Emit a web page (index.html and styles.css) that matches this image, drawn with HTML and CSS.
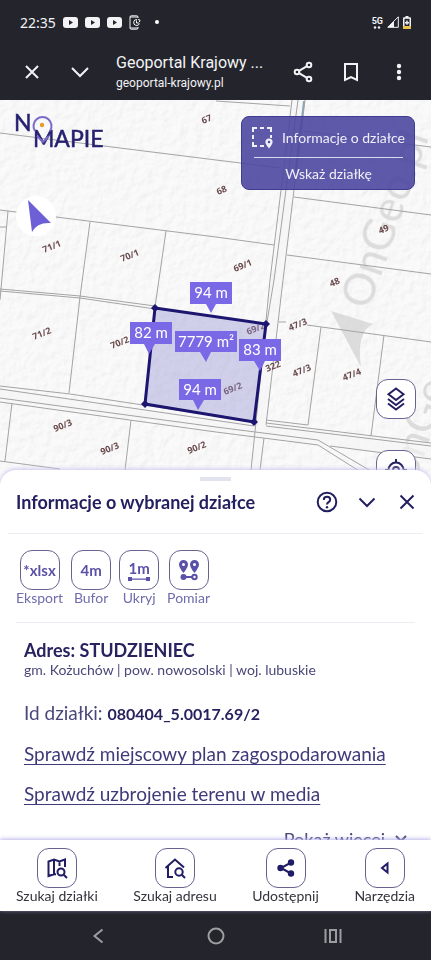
FILE: index.html
```
<!DOCTYPE html>
<html lang="pl">
<head>
<meta charset="utf-8">
<meta name="viewport" content="width=device-width, initial-scale=1">
<title>Geoportal Krajowy</title>
<link rel="stylesheet" href="styles.css">
</head>
<body>
<div class="screen">
  <header class="system">
    <div class="status">
      <div class="status-side">
        <span class="clock">22:35</span>
        <svg class="yt" viewBox="0 0 15 11"><rect width="15" height="11" rx="3"/><path class="ink" d="M6 3l4 2.500-4 2.500z"/></svg>
        <svg class="yt" viewBox="0 0 15 11"><rect width="15" height="11" rx="3"/><path class="ink" d="M6 3l4 2.500-4 2.500z"/></svg>
        <svg class="yt" viewBox="0 0 15 11"><rect width="15" height="11" rx="3"/><path class="ink" d="M6 3l4 2.500-4 2.500z"/></svg>
        <svg class="device" viewBox="0 0 12 15"><path class="line" d="M9 3V2a1.200 1.200 0 0 0-1.200-1.200H2.200A1.200 1.200 0 0 0 1 2v11a1.200 1.200 0 0 0 1.200 1.200h5.600A1.200 1.200 0 0 0 9 13v-1M1 2h8M1 13h8M8 4.500a3 3 0 1 0 2.500 4M7.500 5.500V8H10M9 4.500l2 .5-.5 2"/></svg>
        <span class="dot"></span>
      </div>
      <div class="status-side status-right">
        <span class="network">5G<svg viewBox="0 0 8 3"><circle cx="2" cy="1.500" r="1.200"/><circle cx="6" cy="1.500" r="1.200"/></svg></span>
        <svg class="signal" viewBox="0 0 12 12"><path class="line" d="M.8 11.300L11.300.8v10.500z"/><path d="M.8 11.300L7 5v6.300z"/></svg>
        <svg class="battery" viewBox="0 0 8 13"><path d="M2.500 0h3v1.300H7A1 1 0 0 1 8 2.300V12a1 1 0 0 1-1 1H1a1 1 0 0 1-1-1V2.300a1 1 0 0 1 1-1h1.500z"/><path class="ink" d="M1.500 2.800h5v7.200h-5z"/><path class="charge" d="M0 10h8v2a1 1 0 0 1-1 1H1a1 1 0 0 1-1-1z"/><path d="M3.300 4.500h1.400V6h1.300v1.400H4.700v1.400H3.300V7.400H2V6h1.300z"/></svg>
      </div>
    </div>
    <div class="toolbar">
      <button class="bare" aria-label="Zamknij kartę"><svg class="i24" viewBox="0 0 24 24"><path class="line" d="M6 6l12 12M18 6L6 18"/></svg></button>
      <button class="bare" aria-label="Zwiń kartę"><svg class="i24" viewBox="0 0 24 24"><path class="line" d="M4 8l8 8 8-8"/></svg></button>
      <div class="page-name"><span class="page-title">Geoportal Krajowy ...</span><span class="page-url">geoportal-krajowy.pl</span></div>
      <button class="bare" aria-label="Udostępnij stronę"><svg class="i24" viewBox="0 0 24 24"><g class="line"><circle cx="6" cy="12" r="2.300"/><circle cx="18" cy="5" r="2.300"/><circle cx="18" cy="19" r="2.300"/><path d="M8 10.900l8-4.700M8 13.100l8 4.700"/></g></svg></button>
      <button class="bare" aria-label="Dodaj zakładkę"><svg class="i24" viewBox="0 0 24 24"><path class="line" d="M6 4h12v16l-6-3-6 3z"/></svg></button>
      <button class="bare" aria-label="Menu"><svg class="i24" viewBox="0 0 24 24"><circle cx="12" cy="6" r="2.200"/><circle cx="12" cy="12" r="2.200"/><circle cx="12" cy="18" r="2.200"/></svg></button>
    </div>
  </header>

  <main class="content">
    <section class="map" aria-label="Mapa działek">
      <svg class="canvas" viewBox="0 100 431 386" preserveAspectRatio="xMidYMin slice">
        <defs>
          <filter id="paper" x="0" y="0" width="100%" height="100%">
            <feTurbulence type="fractalNoise" baseFrequency="0.12" numOctaves="3" seed="4" result="n"/>
            <feDiffuseLighting in="n" surfaceScale="0.9" diffuseConstant="1.130" lighting-color="#fbfbfb"><feDistantLight azimuth="225" elevation="60"/></feDiffuseLighting>
          </filter>
        </defs>
        <rect x="0" y="100" width="431" height="391" fill="#f8f8f8"/>
        <rect x="0" y="100" width="431" height="391" filter="url(#paper)" opacity=".4"/>
        <g class="watermark">
          <text transform="translate(369 311) rotate(-71)">OnGeo.pl</text>
          <text transform="translate(415 483) rotate(-71)">onGeo.pl</text>
          <path d="M331 311l42 13q-17 8-12 43z"/>
        </g>
        <g class="roadfill"><path d="M292 101h12l-39 321-5 48h-8l5-48z"/><path d="M0 389l216 31 215 24v15l-113-14-102-15L0 400z"/></g>
        <g class="borders">
          <path d="M0 133L216 160L281 168M0 210L216 237L274 245M8 211L0 300M90 222L80 297L69 393M166 231L155 307M0 227h6M216 101L290 106"/>
          <path d="M292 100L270 280L256 422L251 470M298 100L274 280L267 322M305 100L283 280L266 425M264 438L260 470M294 197L431 215M287 255L431 274M303 131L431 147"/>
          <path d="M0 289L80 296L155 306M0 291L80 298L155 309M0 386L70 394L216 416L254 422M0 389L145 410L254 426M0 398L216 427L318 440L376 474M0 402L216 432L318 445L364 474M12 403L5 461M131 420L125 470M0 461L60 469"/>
          <path d="M279 322h7M307 325L431 342M321 327L308 425L266 420M384 335L371 436M266 423L431 443M266 426L431 446M330 446L431 459"/>
        </g>
        <path class="water" d="M304 101L296 170"/>
        <g class="numbers">
          <text transform="translate(203 124) rotate(-22)">67</text><text transform="translate(218 195) rotate(-22)">68</text>
          <text transform="translate(44 253) rotate(-22)">71/1</text><text transform="translate(122 262) rotate(-22)">70/1</text>
          <text transform="translate(235 272) rotate(-22)">69/1</text><text transform="translate(380 234) rotate(-22)">49</text>
          <text transform="translate(331 287) rotate(-22)">48</text><text transform="translate(34 340) rotate(-22)">71/2</text>
          <text transform="translate(112 349) rotate(-22)">70/2</text><text transform="translate(290 331) rotate(-22)">47/3</text>
          <text transform="translate(294 377) rotate(-22)">47/3</text><text transform="translate(344 381) rotate(-22)">47/4</text>
          <text transform="translate(267 372) rotate(-22)">322</text><text transform="translate(55 432) rotate(-22)">90/3</text>
          <text transform="translate(102 455) rotate(-22)">90/3</text><text transform="translate(189 454) rotate(-22)">90/2</text>
          <text transform="translate(248 335) rotate(-22)">69/2</text><text transform="translate(225 395) rotate(-22)">69/2</text>
        </g>
        <path class="parcel" d="M155 308L266 324L254 422L145 404z"/>
        <g class="nodes"><path d="M155 304l4 4-4 4-4-4zM266 320l4 4-4 4-4-4zM254 418l4 4-4 4-4-4zM145 400l4 4-4 4-4-4z"/></g>
        <g class="tags">
          <path d="M190 282h42v22h-16l-5 9-5-9h-16zM130 322h42v22h-17l-6 10-5-10h-14zM175 331h62v21h-26l-5 10-6-10h-25zM239 339h42v22h-16l-5 10-6-10h-15zM179 379h42v21h-17l-6 10-5-10h-14z"/>
          <text x="211" y="298">94 m</text><text x="151" y="338">82 m</text><text x="206" y="347">7779 m²</text><text x="260" y="355">83 m</text><text x="200" y="395">94 m</text>
        </g>
        <g class="compass"><circle cx="36" cy="216" r="20"/><path d="M28 200l23 23q-14-1-19 9z"/></g>
        <g class="logo">
          <text x="14" y="131">N</text><text x="33" y="147">MAPIE</text>
          <path class="pin" d="M35 131a9 9 0 1 1 15 0M37 136l6 6 6-6"/><circle cx="42" cy="125" r="2.200"/>
        </g>
      </svg>

      <div class="hint">
        <button class="hint-main">
          <svg class="select-area" viewBox="0 0 24 24"><path class="line" d="M3 7V3h4M10 3h4M17 3h4v4M21 10v3M3 10v4M3 17v4h4M10 21h4"/><path d="M19 13.500a3.600 3.600 0 0 0-3.600 3.600c0 2.500 3.600 6.400 3.600 6.400s3.600-3.900 3.600-6.400a3.600 3.600 0 0 0-3.600-3.600z"/><circle class="hole" cx="19" cy="17" r="1.200"/></svg>
          Informacje o działce
        </button>
        <button class="hint-sub">Wskaż działkę</button>
      </div>

      <div class="map-actions">
        <button class="tile" aria-label="Warstwy"><svg class="i24" viewBox="0 0 24 24"><g class="line"><path d="M12 1.500l7.500 5.800-7.500 5.800-7.500-5.800z"/><path d="M4 12l8 6 8-6M4 16.500l8 6 8-6"/></g></svg></button>
        <button class="tile" aria-label="Moja lokalizacja"><svg class="i24" viewBox="0 0 24 24"><circle class="line" cx="12" cy="12" r="7.500"/><circle class="line" cx="12" cy="12" r="3"/><path class="line" d="M12 1v4M12 19v4M1 12h4M19 12h4"/></svg></button>
      </div>
    </section>

    <section class="sheet">
      <div class="grip"></div>
      <header class="sheet-head">
        <h1>Informacje o wybranej działce</h1>
        <button class="bare" aria-label="Pomoc"><svg class="i24" viewBox="0 0 24 24"><circle class="line" cx="12" cy="12" r="9.300"/><path class="line" d="M8.800 10c0-1.900 1.300-3.200 3.200-3.200s3.200 1.200 3.200 2.900c0 2.400-3.200 2.500-3.200 4.800"/><circle cx="12" cy="17.200" r="1.200"/></svg></button>
        <button class="bare" aria-label="Zwiń"><svg class="i24" viewBox="0 0 24 24"><path class="line" d="M4.500 8.500l7.500 7.500 7.500-7.500"/></svg></button>
        <button class="bare" aria-label="Zamknij"><svg class="i24" viewBox="0 0 24 24"><path class="line" d="M5.500 5.500l13 13M18.500 5.500l-13 13"/></svg></button>
      </header>
      <div class="tools">
        <button class="tool"><span class="tile">*xlsx</span>Eksport</button>
        <button class="tool"><span class="tile">4m</span>Bufor</button>
        <button class="tool"><span class="tile measure">1m<svg viewBox="0 0 22 4"><path d="M0 0h4v4H0zM18 0h4v4h-4zM4 1.500h14v1.200H4z"/></svg></span>Ukryj</button>
        <button class="tool"><span class="tile"><svg class="i24" viewBox="0 0 24 24"><path fill-rule="evenodd" d="M6.500 2A4.500 4.500 0 0 0 2 6.500C2 9.700 6.500 15 6.500 15S11 9.700 11 6.500A4.500 4.500 0 0 0 6.500 2zm0 3a1.500 1.500 0 1 1 0 3 1.500 1.500 0 0 1 0-3zM17.500 2A4.500 4.500 0 0 0 13 6.500c0 3.200 4.500 8.500 4.500 8.500S22 9.700 22 6.500A4.500 4.500 0 0 0 17.500 2zm0 3a1.500 1.500 0 1 1 0 3 1.500 1.500 0 0 1 0-3z"/><circle cx="6.500" cy="19" r="3"/><path d="M8 18h8v2H8z"/><circle class="line" cx="17.500" cy="19" r="2.200"/></svg></span>Pomiar</button>
      </div>
      <div class="details">
        <h2>Adres: STUDZIENIEC</h2>
        <p class="region">gm. Kożuchów | pow. nowosolski | woj. lubuskie</p>
        <p class="row">Id działki: <strong>080404_5.0017.69/2</strong></p>
        <a class="row" href="#plan">Sprawdź miejscowy plan zagospodarowania</a>
        <a class="row" href="#media">Sprawdź uzbrojenie terenu w media</a>
        <button class="more">Pokaż więcej <svg viewBox="0 0 12 8"><path class="line" d="M1 1l5 5 5-5"/></svg></button>
      </div>
    </section>
  </main>

  <nav class="tabs">
    <button class="tab"><span class="tile"><svg class="i24" viewBox="0 0 24 24"><g class="line"><path d="M20 11V3.500l-5.500 2-5.500-2-5.500 2V20L9 18.200h2M9 3.500v14.500M14.500 5.500V10"/><circle cx="16" cy="16" r="3.500"/><path d="M18.700 18.700L22 22"/></g></svg></span>Szukaj działki</button>
    <button class="tab"><span class="tile"><svg class="i24" viewBox="0 0 24 24"><g class="line"><path d="M2.500 12L12 3.500l9 8M5 10v11h5"/><circle cx="16" cy="16" r="3.700"/><path d="M18.800 18.800L22 22"/></g></svg></span>Szukaj adresu</button>
    <button class="tab"><span class="tile"><svg class="i24" viewBox="0 0 24 24"><circle cx="6.500" cy="12" r="3.200"/><circle cx="17" cy="6.500" r="3.200"/><circle cx="17" cy="17.500" r="3.200"/><path class="line" d="M17 6.500L7 12l10 5.500"/></svg></span>Udostępnij</button>
    <button class="tab"><span class="tile"><svg class="i24" viewBox="0 0 24 24"><path class="line" d="M14.500 7.500v9L9 12z"/></svg></span>Narzędzia</button>
  </nav>

  <footer class="android">
    <button class="bare" aria-label="Wstecz"><svg class="i24" viewBox="0 0 24 24"><path class="line" d="M15.500 5.500L7.500 12l8 6.500"/></svg></button>
    <button class="bare" aria-label="Ekran główny"><svg class="i24" viewBox="0 0 24 24"><circle class="line" cx="12" cy="12" r="7.500"/></svg></button>
    <button class="bare" aria-label="Ostatnie"><svg class="i24" viewBox="0 0 24 24"><path class="line" d="M4.500 5v14M19.500 5v14M9 6h6v12H9z"/></svg></button>
  </footer>
</div>
</body>
</html>
```
FILE: styles.css
```
* { box-sizing: border-box; }
body { margin: 0; font-family: Lato, "Noto Sans", sans-serif; color: #242060; }
h1, h2, p { margin: 0; }
button { font: inherit; color: inherit; background: none; border: 0; padding: 0; cursor: pointer; }
svg { display: block; fill: currentColor; flex: none; }
.line { fill: none; stroke: currentColor; stroke-width: 2; }
.i24 { width: 24px; height: 24px; }
.bare { display: flex; }

.screen { display: flex; flex-direction: column; height: 100vh; overflow: hidden; background: #fff; }

.system { background: #24252c; color: #f3f3f6; font-family: Roboto, "Noto Sans", sans-serif; }
.status { display: flex; justify-content: space-between; align-items: center; height: 44px; padding: 0 20px; }
.status-side { display: flex; align-items: center; gap: 7px; }
.status-right { gap: 4px; }
.clock { font: 14px "Noto Sans", sans-serif; }
.yt { width: 15px; height: 11px; }
.ink { fill: #24252c; }
.device { width: 12px; height: 15px; }
.device .line, .signal .line { stroke-width: 1; }
.dot { width: 4px; height: 4px; margin-left: 7px; border-radius: 50%; background: #fff; }
.network { display: flex; flex-direction: column; align-items: center; font-size: 9px; font-weight: 700; line-height: 10px; }
.network svg { width: 8px; height: 3px; }
.signal { width: 12px; height: 12px; }
.battery { width: 8px; height: 13px; }
.charge { fill: #e8c34a; }

.toolbar { display: flex; align-items: center; height: 56px; padding: 0 20px; gap: 24px; }
.page-name { flex: 1; min-width: 0; display: flex; flex-direction: column; }
.page-title { font-size: 16px; line-height: 22px; white-space: nowrap; }
.page-url { font-size: 12px; line-height: 18px; }

.content { flex: 1; min-height: 0; display: flex; flex-direction: column; }
.map { position: relative; flex: 386 1 0; min-height: 0; margin-bottom: -16px; overflow: hidden; }
.canvas { width: 100%; height: 100%; }
.watermark { fill: #d0d0d2; opacity: .7; font: 44px Lato, sans-serif; }
.roadfill { fill: #f5f5f5; fill-opacity: .6; }
.borders { fill: none; stroke: #a3a3a3; stroke-width: 1; }
.water { fill: none; stroke: #8fa6b4; stroke-width: 2; }
.numbers { fill: #6b4b4d; font: 700 9px "Open Sans", sans-serif; }
.parcel { fill: #8d8bcf; fill-opacity: .38; stroke: #1c1670; stroke-width: 3; }
.nodes { fill: #1c1670; }
.tags { fill: #7a69e6; }
.tags text { fill: #fff; font: 15px Lato, sans-serif; text-anchor: middle; }
.compass circle { fill: #fff; }
.compass path { fill: #6d5fd6; }
.logo { fill: #25216f; font: 23px Lato, sans-serif; }
.logo text { stroke: #25216f; stroke-width: .5; }
.logo .pin { fill: none; stroke: #7a69c8; stroke-width: 2; }
.logo circle { fill: #e69a2e; }

.hint { position: absolute; top: 16px; right: 16px; width: 174px; padding: 0 4px 0 8px; border: 1px solid #403b93; border-radius: 8px; background: rgba(76, 71, 158, .9); color: #efeef9; font-size: 14px; }
.hint-main { display: flex; align-items: center; gap: 8px; width: 100%; height: 40px; white-space: nowrap; }
.hint-sub { display: block; width: 149px; height: 32px; margin-left: 4px; border-top: 1px solid #dcdaf0; }
.select-area { width: 24px; height: 24px; }
.hole { fill: #4c479e; }

.tile { display: flex; align-items: center; justify-content: center; width: 40px; height: 40px; border: 1px solid #66638f; border-radius: 12px; background: #fff; }
.map-actions { position: absolute; top: 279px; right: 15px; display: grid; gap: 31px; }

.sheet { position: relative; flex: 370 1 0; min-height: 0; overflow: hidden; border-radius: 16px 16px 0 0; background: #fff; box-shadow: 0 -1px 4px #c9c5ee; }
.grip { width: 31px; height: 4px; margin: 7px auto 0; background: #e1e3ee; }
.sheet-head { display: flex; align-items: center; gap: 16px; height: 53px; margin: 0 8px; padding: 0 4px 10px 8px; border-bottom: 1px solid #ececf2; }
.sheet-head h1 { flex: 1; font-size: 18px; font-weight: 700; white-space: nowrap; }

.tools { display: flex; gap: 8px; margin: 0 16px; padding-top: 16px; height: 89px; border-bottom: 1px solid #ececf2; }
.tool { display: flex; flex-direction: column; align-items: center; font-size: 14px; line-height: 16px; color: #706cad; }
.tool .tile { font-size: 15px; font-weight: 700; color: #5b51a8; }
.tool .measure { flex-direction: column; line-height: 17px; }
.measure svg { width: 22px; height: 4px; }

.details { display: flex; flex-direction: column; align-items: flex-start; padding: 16px 24px; color: #4a4779; }
.details h2 { font-size: 18px; line-height: 22px; color: #28235f; }
.region { font-size: 14px; line-height: 18px; }
.row { font-size: 19px; line-height: 24px; margin-top: 16px; white-space: nowrap; text-underline-offset: 3px; }
p.row { margin-top: 22px; }
.row strong { font-size: 16px; color: #28235f; }
.details a { color: #3f3b78; }
.more { display: flex; align-items: center; gap: 10px; align-self: flex-end; margin-top: 22px; font-size: 18px; line-height: 22px; }
.more svg { width: 12px; height: 8px; }

.tabs { position: relative; display: flex; justify-content: space-between; padding: 8px 16px; background: #fff; box-shadow: 0 -1px 4px #b9b3ea; }
.tab { display: flex; flex-direction: column; align-items: center; font-size: 14px; line-height: 15px; color: #33333b; }
.tab .tile { color: #211c66; }

.android { display: flex; align-items: center; justify-content: center; gap: 93px; height: 49px; background: #24252c; color: #9c9ca1; }
```
